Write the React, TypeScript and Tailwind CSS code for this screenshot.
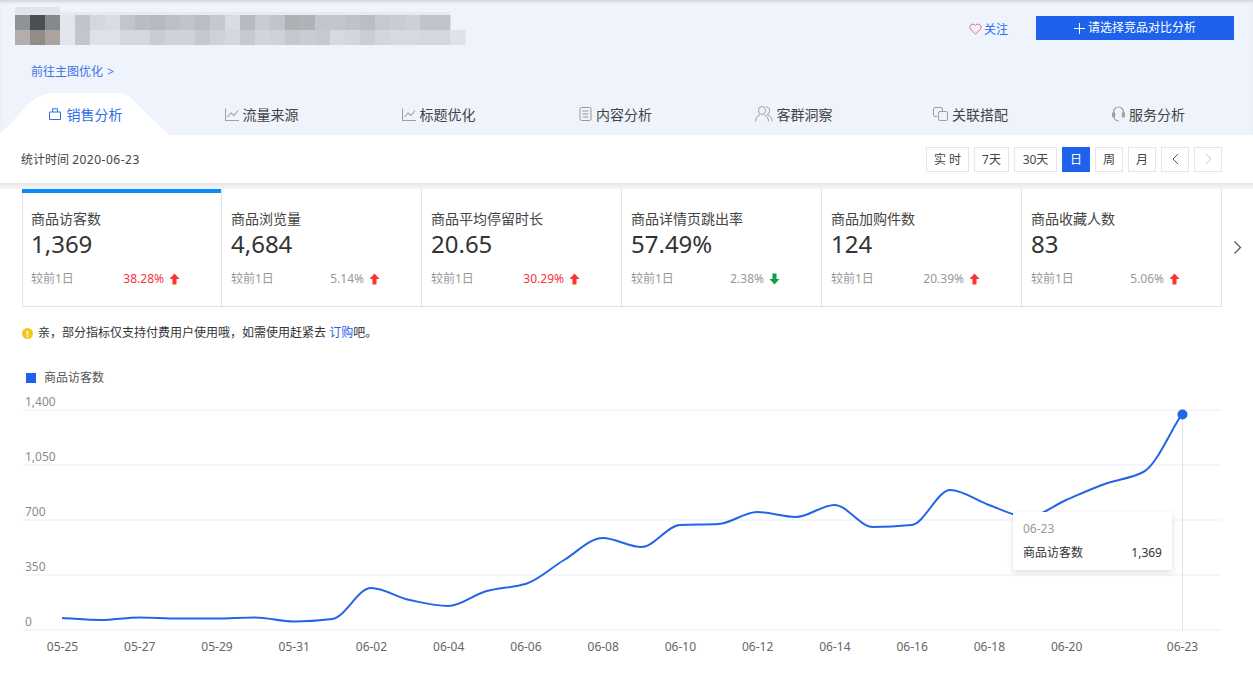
const FONT = "font-['Noto_Sans','Noto_Sans_CJK_SC',sans-serif]";

const MOSAIC_TOP = ["#8f9296", "#4a4f52", "#85888d", "#e2e6ee", "#c0c4cd", "#d3d7e0", "#d8dce5", "#c1c5cd", "#b9bcc3", "#b6b9bf", "#bcbfc6", "#c1c4cc", "#bbbdc3", "#c4c8d0", "#d8dce4", "#b7babf", "#c9ccd4", "#c1c4cd", "#adb0b5", "#afb2b7", "#c3c6ce", "#c3c6ce", "#bfc2c9", "#bbbdc2", "#c6c9d1", "#c9ccd4", "#cdd0d8", "#c1c4cc", "#c1c4cc"];
const MOSAIC_BOTTOM = ["#b3aeac", "#918c87", "#aaa3a0", "#e2e6ee", "#c3c6cc", "#dde1ea", "#dde1ea", "#d3d7e0", "#d3d7e0", "#c8ccd3", "#ced2d9", "#ced2d9", "#c4c8d0", "#ced1d8", "#d3d7e0", "#c5c9d1", "#d1d4dc", "#cdd1d9", "#c3c7ce", "#c8ccd4", "#c6c9cf", "#d6d9e1", "#d3d6de", "#cacdd3", "#d3d6de", "#d6d9e1", "#d6d9e1", "#d3d7e0", "#d3d7e0", "#dfe2eb"];

const cards = [
  { title: "商品访客数", value: "1,369", pct: "38.28%", up: true, hot: true, active: true },
  { title: "商品浏览量", value: "4,684", pct: "5.14%", up: true },
  { title: "商品平均停留时长", value: "20.65", pct: "30.29%", up: true, hot: true },
  { title: "商品详情页跳出率", value: "57.49%", pct: "2.38%", up: false },
  { title: "商品加购件数", value: "124", pct: "20.39%", up: true },
  { title: "商品收藏人数", value: "83", pct: "5.06%", up: true },
];

const ranges = [
  { label: "实 时", w: "w-[43px]" },
  { label: "7天", w: "w-[35px]" },
  { label: "30天", w: "w-[43px]" },
  { label: "日", w: "w-[28px]", active: true },
  { label: "周", w: "w-[28px]" },
  { label: "月", w: "w-[28px]" },
];

// y pixel of the line for each day from 05-25 to 06-23
const LINE_Y = [618, 620, 617.5, 618.5, 618.5, 617.5, 621.5, 619, 588, 600, 606, 591, 584, 560, 538, 547, 525, 524, 512, 517, 505, 527, 525, 490, 505, 517, 500, 484, 472, 414];
const X_LABELS = ["05-25", "05-27", "05-29", "05-31", "06-02", "06-04", "06-06", "06-08", "06-10", "06-12", "06-14", "06-16", "06-18", "06-20"];
const Y_LABELS = ["1,400", "1,050", "700", "350", "0"];

// monotone curve, flat at peaks like the chart lib draws it
function linePath() {
  const step = 38.62;
  const ys = LINE_Y.map((y) => y - 395);
  const slopes = ys.slice(1).map((y, i) => (y - ys[i]) / step);
  const tangent = ys.map((_, i) => {
    if (i === 0) return slopes[0];
    if (i === ys.length - 1) return slopes[slopes.length - 1];
    const a = slopes[i - 1];
    const b = slopes[i];
    if (a * b <= 0) return 0;
    return (2 * a * b) / (a + b);
  });
  let d = `M62 ${ys[0]}`;
  for (let i = 0; i < ys.length - 1; i++) {
    const x1 = 62 + i * step;
    const x2 = x1 + step;
    d += ` C${x1 + step / 3} ${ys[i] + (tangent[i] * step) / 3} ${x2 - step / 3} ${ys[i + 1] - (tangent[i + 1] * step) / 3} ${x2} ${ys[i + 1]}`;
  }
  return d;
}

function BagIcon() {
  return (
    <svg width="12" height="12" viewBox="0 0 12 12" fill="none" stroke="#2a6ee8" strokeWidth="1">
      <path d="M.5 4h11v7.500H.5z" />
      <path d="M3.500 4V.8h5V4" />
    </svg>
  );
}

function ChartIcon() {
  return (
    <svg width="14" height="13" viewBox="0 0 14 13" fill="none" stroke="#a0a0a0" strokeWidth="1.100">
      <path d="M.5 .5v12h13.500" />
      <path d="M2.500 9l3.500-4 3 2.500L13 2.500" />
    </svg>
  );
}

function DocIcon() {
  return (
    <svg width="13" height="14" viewBox="0 0 13 14" fill="none" stroke="#999" strokeWidth="1">
      <rect x="1" y=".5" width="11" height="13" rx="1.500" />
      <path d="M3.500 4h6M3.500 7h6M3.500 10h6" />
    </svg>
  );
}

function PeopleIcon() {
  return (
    <svg width="18" height="16" viewBox="0 0 18 16" fill="none" stroke="#a0a0a0" strokeWidth="1">
      <ellipse cx="7" cy="4.500" rx="3.500" ry="4" />
      <path d="M.5 15.500c0-4 2-6 4.500-6.500M13.500 15.500c0-4-2-6-4.500-6.500" />
      <path d="M11 .8c2.200 0 3.600 1.700 3.600 3.700S13.400 8 12 8.600c3 1 5 3 5.300 6.900" />
    </svg>
  );
}

function LinkIcon() {
  return (
    <svg width="15" height="14" viewBox="0 0 15 14" fill="none" stroke="#a0a0a0" strokeWidth="1">
      <path d="M4 9.500H2A1.500 1.500 0 0 1 .5 8V2A1.500 1.500 0 0 1 2 .5h6A1.500 1.500 0 0 1 9.500 2v2" />
      <rect x="5.500" y="4.500" width="9" height="9" rx="1.500" />
    </svg>
  );
}

function HeadsetIcon() {
  return (
    <svg width="13" height="16" viewBox="0 0 13 16" fill="none" stroke="#a0a0a0" strokeWidth="1.200">
      <path d="M1.500 9V6a5 5 0 0 1 10 0v3" />
      <rect x=".6" y="6.500" width="2" height="4.500" rx="1" fill="#a0a0a0" />
      <rect x="10.400" y="6.500" width="2" height="4.500" rx="1" fill="#a0a0a0" />
      <path d="M2 11c.3 2.500 2 3.700 4.500 3.900" />
    </svg>
  );
}

const tabs = [
  { label: "销售分析", icon: <BagIcon />, active: true, cls: "gap-[6px] pl-[2px]" },
  { label: "流量来源", icon: <ChartIcon />, cls: "gap-[4px]" },
  { label: "标题优化", icon: <ChartIcon />, cls: "gap-[4px]" },
  { label: "内容分析", icon: <DocIcon />, cls: "gap-[4px]" },
  { label: "客群洞察", icon: <PeopleIcon />, cls: "gap-[4px] pl-[2px]" },
  { label: "关联搭配", icon: <LinkIcon />, cls: "gap-[4px] pl-[2px]" },
  { label: "服务分析", icon: <HeadsetIcon />, cls: "gap-[4px] pl-[4px]" },
];

function Arrow({ up }: { up: boolean }) {
  return (
    <svg width="11" height="12" viewBox="0 0 11 12" className={up ? "" : "rotate-180"}>
      <path d="M5.500 .5L10.500 6H7.500V11.500H3.500V6H.5z" fill={up ? "#f5362e" : "#0aa14c"} />
    </svg>
  );
}

export default function App() {
  return (
    <div className={`${FONT} w-[1253px] h-[686px] overflow-hidden bg-white flex flex-col text-[#333]`}>
      {/* Header */}
      <header className="h-[135px] shrink-0 bg-[#eef3fc] flex flex-col shadow-[inset_0_3px_3px_-1px_rgba(0,0,0,0.12)]">
        <div className="flex items-start pt-[7px] pl-[15px] pr-[19px]">
          <svg width="465" height="38" viewBox="0 0 465 38" className="shrink-0">
            <rect x="0" y="0" width="45" height="8" fill="#e2e4ea" />
            <rect x="45" y="5" width="390" height="3" fill="#e6eaf2" />
            {MOSAIC_TOP.map((c, i) => (
              <rect key={i} x={i * 15} y="8" width="15.500" height="15.500" fill={c} />
            ))}
            {MOSAIC_BOTTOM.map((c, i) => (
              <rect key={i} x={i * 15} y="23" width="15.500" height="15" fill={c} />
            ))}
          </svg>
          <div className="ml-auto flex items-center mt-[9px]">
            <svg width="13" height="12" viewBox="0 0 13 12" fill="none" stroke="#ef6a8a" strokeWidth="1" className="mr-[2px] -ml-[1px] mt-[2px]">
              <path d="M6.500 11.200L1.400 6A3.100 3.100 0 0 1 6 1.900l.5.6.5-.6A3.100 3.100 0 0 1 11.600 6z" />
            </svg>
            <a className="text-[12px] text-[#2a6ee8] mr-[28px] mt-[3px]">关注</a>
            <button className="w-[198px] h-[24px] bg-[#1e62ec] text-white text-[12px] flex items-center justify-center">
              <svg width="11" height="11" viewBox="0 0 11 11" stroke="#fff" strokeWidth="1" className="mr-[3px]">
                <path d="M5.500 0v11M0 5.500h11" />
              </svg>
              请选择竞品对比分析
            </button>
          </div>
        </div>
        <a className="mt-[18px] ml-[31px] text-[12px] leading-[18px] text-[#3a76e6]">前往主图优化 <span className="ml-[1px]">&gt;</span></a>
        <nav className="mt-auto h-[42px] flex -ml-[4px]">
          {tabs.map((t) => (
            <div
              key={t.label}
              className={`relative w-[177px] flex items-center justify-center text-[14px] ${t.active ? "text-[#2a6ee8]" : "text-[#444]"}`}
            >
              {t.active && (
                <svg width="173" height="42" viewBox="0 0 173 42" className="absolute left-[1px] top-0">
                  <path d="M0 42C14 36 28 8 44 3C47 1 52 0 58 0H120C128 0 133 3 137 8L172 42z" fill="#fff" />
                </svg>
              )}
              <span className={`relative flex items-center ${t.cls}`}>
                {t.icon}
                {t.label}
              </span>
            </div>
          ))}
        </nav>
      </header>

      {/* Date range bar */}
      <div className="h-[48px] shrink-0 flex items-center justify-between pl-[21px] pr-[31px] relative">
        <span className="text-[12px] text-[#444] pt-[1px]">统计时间 <span className="tracking-[0.5px]">2020-06-23</span></span>
        <div className="flex gap-[5px] text-[12px] text-[#444]">
          {ranges.map((r) => (
            <div
              key={r.label}
              className={`${r.w} h-[25px] pt-[1px] flex items-center justify-center border ${r.active ? "bg-[#1e62ec] border-[#1e62ec] text-white" : "border-[#e3e5e8]"}`}
            >
              {r.label}
            </div>
          ))}
          <div className="w-[28px] h-[25px] flex items-center justify-center border border-[#e3e5e8]">
            <svg width="7" height="12" viewBox="0 0 7 12" fill="none" stroke="#555" strokeWidth="1">
              <path d="M6 1L1 6l5 5" />
            </svg>
          </div>
          <div className="w-[28px] h-[25px] flex items-center justify-center border border-[#e3e5e8]">
            <svg width="7" height="12" viewBox="0 0 7 12" fill="none" stroke="#c8c8c8" strokeWidth="1">
              <path d="M1 1l5 5-5 5" />
            </svg>
          </div>
        </div>
      </div>
      <div className="h-[6px] shrink-0 bg-gradient-to-b from-[#e6e6e6] to-[#f6f6f6]" />

      {/* Metric cards */}
      <div className="flex items-center pl-[22px]">
        <div className="flex h-[118px] w-[1200px] border-b border-r border-[#dce5ee]">
          {cards.map((c) => (
            <div key={c.title} className="relative w-[200px] first:w-[199px] shrink-0 border-l border-[#dce5ee] pl-[9px] first:pl-[8px] pt-[20px]">
              {c.active && <div className="absolute -left-px right-0 top-0 h-[4px] bg-[#0a8cff]" />}
              <div className="text-[14px] leading-[20px] text-[#444]">{c.title}</div>
              <div className="text-[24px] leading-[30px] text-[#333]">{c.value}</div>
              <div className="mt-[10px] w-[149px] flex items-center text-[12px] leading-[20px]">
                <span className="text-[#999]">较前1日</span>
                <span className={`ml-auto mr-[5px] ${c.hot ? "text-[#f5333f]" : "text-[#999]"}`}>{c.pct}</span>
                <Arrow up={c.up} />
              </div>
            </div>
          ))}
        </div>
        <svg width="9" height="15" viewBox="0 0 9 15" fill="none" stroke="#555" strokeWidth="1.200" className="ml-[11px] -mt-[2px]">
          <path d="M1.500 1.500L7.500 7.500l-6 6" />
        </svg>
      </div>

      {/* Notice */}
      <div className="mt-[17px] ml-[22px] flex items-center text-[12px] leading-[18px] text-[#333]">
        <span className="w-[11px] h-[11px] rounded-full bg-[#f5c61c] text-white text-[9px] leading-[11px] text-center font-bold mr-[5px]">!</span>
        亲，部分指标仅支持付费用户使用哦，如需使用赶紧去&nbsp;<a className="text-[#2a5cf0]">订购</a>吧。
      </div>

      {/* Legend */}
      <div className="mt-[27px] ml-[26px] flex items-center text-[12px] leading-[18px] text-[#555]">
        <span className="w-[10px] h-[10px] bg-[#1e62ec] mr-[8px]" />
        商品访客数
      </div>

      {/* Chart */}
      <div className="relative mt-[2px] h-[276px]">
        <svg width="1253" height="276" viewBox="0 0 1253 276" className="block">
          <g transform="translate(0 6)">
            {[15, 70, 125, 180, 235].map((y) => (
              <line key={y} x1="23" x2="1221" y1={y} y2={y} stroke="#f5f6fb" strokeWidth="2" />
            ))}
            {Y_LABELS.map((l, i) => (
              <text key={l} x="25" y={11 + i * 55} fontSize="12" fill="#8c8c8c">{l}</text>
            ))}
            {X_LABELS.map((l, i) => (
              <text key={l} x={62.500 + i * 77.240} y="256" fontSize="12" fill="#666" textAnchor="middle">{l}</text>
            ))}
            <text x="1182.500" y="256" fontSize="12" fill="#666" textAnchor="middle">06-23</text>
            <line x1="1182.500" x2="1182.500" y1="19" y2="235" stroke="#dfe1e6" />
            <path d={linePath()} fill="none" stroke="#2364e8" strokeWidth="2" />
            <circle cx="1182.500" cy="19.500" r="5" fill="#2364e8" />
          </g>
        </svg>
        <div className="absolute left-[1013px] top-[123px] w-[159px] h-[58px] bg-white shadow-[0_2px_6px_rgba(0,0,0,0.14)] px-[10px] pt-[8px] text-[12px]">
          <div className="leading-[18px] text-[#999]">06-23</div>
          <div className="mt-[6px] leading-[18px] flex justify-between text-[#333]">
            <span>商品访客数</span>
            <span>1,369</span>
          </div>
        </div>
      </div>
    </div>
  );
}
